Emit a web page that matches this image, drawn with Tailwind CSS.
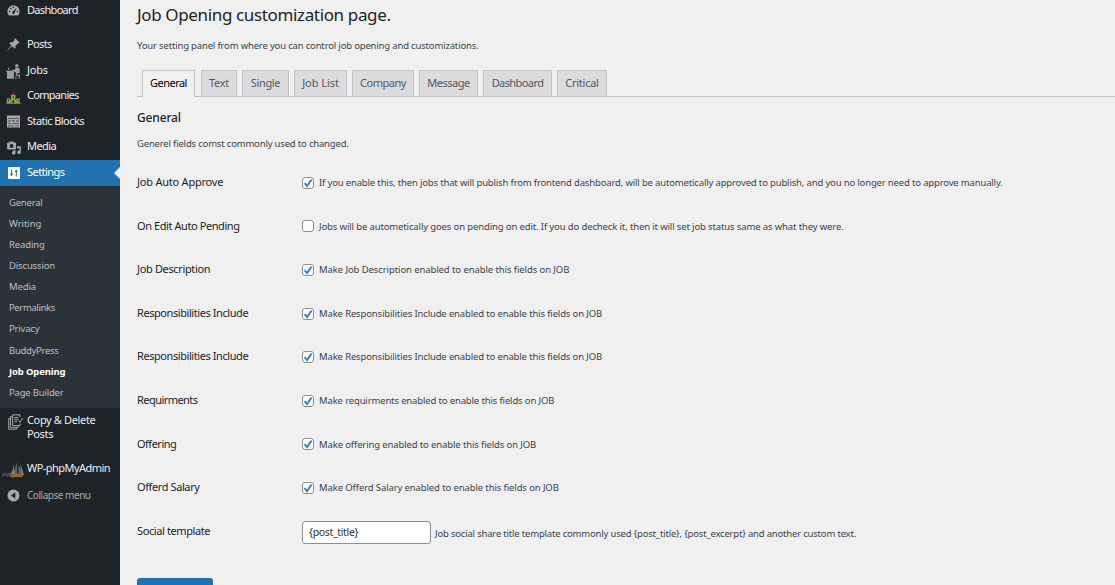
<!DOCTYPE html>
<html lang="en">
<head>
<meta charset="utf-8">
<title>Job Opening</title>
<script src="https://cdn.jsdelivr.net/npm/@tailwindcss/browser@4"></script>
</head>
<body class="flex h-[585px] w-[1115px] overflow-hidden bg-[#f0f0f0] font-['Noto_Sans','Open_Sans',sans-serif] text-[#3c434a]">
<svg class="hidden">
  <symbol id="tick" viewBox="0 0 12 12"><path d="M2.6 6.1 5 9.1 9.5 2.6" fill="none" stroke="#3582c4" stroke-width="1.9"/></symbol>
</svg>

<aside class="flex h-full w-[120px] shrink-0 flex-col bg-[#1d2327] text-[11px] text-[#f0f0f1] [&_svg]:shrink-0">
  <a class="flex h-[21px] items-center whitespace-nowrap">
    <svg class="mx-[7px] size-[13px]" viewBox="0 0 13 13"><path d="M2 11.5A6 6 0 0 1 .4 7.4a6.1 6.1 0 0 1 12.2 0A6 6 0 0 1 11 11.5z" fill="#a7aaad"/><g fill="#1d2327"><circle cx="2.5" cy="7.6" r=".75"/><circle cx="3.8" cy="4.5" r=".75"/><circle cx="6.5" cy="3.2" r=".75"/><circle cx="10.5" cy="7.6" r=".75"/><path d="m9.7 3.7-2 4.6a1.3 1.3 0 1 1-1.9-.8z"/></g></svg>
    <span class="tracking-[-0.68px]">Dashboard</span></a>
  <a class="mt-[10px] flex h-[26px] items-center whitespace-nowrap">
    <svg class="mx-[7px] size-[13px]" viewBox="0 0 13 13"><path d="m8.2.3 4.5 4.5-1.3.8-.7-.1-2.2 2.3c.3 1.2 0 2.2-.8 2.9L5.2 8.2.4 12.7l-.2-.2 4.2-5.1-2.2-2.3c.8-.8 1.8-1 2.9-.7l2.3-2.1-.1-.8z" fill="#a7aaad"/></svg>
    <span class="tracking-[-0.65px]">Posts</span></a>
  <a class="flex h-[26px] items-center whitespace-nowrap">
    <svg class="mx-[6px] mt-[3px] h-[15px] w-[15px]" viewBox="0 0 15 15"><g fill="#9a9da1"><circle cx="10.8" cy="1.8" r="1.7"/><path d="M9.3 3.8h3.4l1 1.2v4.2h-2.4v1.5H14v4h-1.2v-3h-3V8H8.6V6.7H6.3l-.2-1h2.8zM0 6.7h8.2v1.2H7.7v6.7H1.1V7.9H0zM1.7 3.5h.9l.8 2.6H2.3zM9.4 12.5h1.1v2.2H9.4z"/><path d="M1 7.5h6.8v7H1z"/></g></svg>
    <span class="tracking-[-0.2px]">Jobs</span></a>
  <a class="flex h-[25px] items-center whitespace-nowrap">
    <svg class="mx-[6px] mt-[4px] h-[15px] w-[15px]" viewBox="0 0 15 15"><path d="M.8 8.4h3.5V13H.8zM10.2 8.4h3.6V13h-3.6zM5 4.8h4.5V13H5z" fill="#86a843"/><path d="M3.5 10h7.5v3H3.5z" fill="#86a843"/><path d="M6.9.8h.7v2h-.7z" fill="#8c244f"/><path d="M5.3 4.9 7.2 2.8l2 2.1zM1.2 8.5l1.3-1.6 1.3 1.6zM10.8 8.5l1.3-1.6 1.3 1.6z" fill="#8c3153"/><path d="M2 9.7h1v1.5H2zM11.5 9.7h1v1.5h-1zM6.6 6.4h1.3V8H6.6zM6.2 10.4h2V13h-2z" fill="#29352b"/><path d="M.2 12.8h14.1v1H.2z" fill="#8c9b3b"/></svg>
    <span class="tracking-[-0.7px]">Companies</span></a>
  <a class="flex h-[26px] items-center whitespace-nowrap">
    <svg class="mx-[7px] h-[13px] w-[13px]" viewBox="0 0 13 13"><path d="M0 .5h13v12H0z" fill="#a7aaad"/><path d="M1 3h11v.7H1zM1 5.5h2.8v1H1zM5 5.5h2.8v1H5zM9 5.5h3v1H9zM1 8h2.8v.7H1zM5 8h7v.7H5zM1 10.4h5.6v.8H1zM8 10.4h4v.8H8z" fill="#3a4046"/></svg>
    <span class="tracking-[-0.56px]">Static Blocks</span></a>
  <a class="flex h-[26px] items-center whitespace-nowrap">
    <svg class="mt-[2px] mr-[6px] ml-[7px] size-[14px]" viewBox="0 0 14 14"><path fill-rule="evenodd" d="M1 1.5h1.4L3 .4h3.2l.7 1.1h1.3q.8 0 .8.9v5.2q0 .8-.8.8H1q-.9 0-.9-.8V2.4q0-.9.9-.9zM4.6 3.1a1.9 1.9 0 1 0 0 3.8 1.9 1.9 0 0 0 0-3.8z" fill="#a7aaad"/><path d="M10 5.2h3.8v6.3a1.8 1.8 0 1 1-1.3-1.9V7.2H10zM5.2 9.4h1.9v-.2h1.4v2.6a1.8 1.8 0 1 1-1.3-1.7z" fill="#a7aaad"/></svg>
    <span class="mb-[2px] tracking-[-0.55px]">Media</span></a>
  <a class="flex h-[26px] items-center whitespace-nowrap bg-[#2271b1] text-white">
    <svg class="mx-[8px] size-[12px]" viewBox="0 0 12 12"><rect width="12" height="12" rx=".8" fill="#fff"/><path d="M3.5 2.4v6M8.3 9.6v-6" stroke="#2271b1" stroke-width="1.1"/><path d="M1.8 6.7h3.4L3.5 9.3zM6.6 5h3.4L8.3 2.4z" fill="#2271b1"/></svg>
    <span class="mb-[2px] -ml-px tracking-[-0.55px]">Settings</span>
    <svg class="ml-auto h-[12px] w-[6px]" viewBox="0 0 6 12"><path d="M6 0v12L0 6z" fill="#f0f0f0"/></svg></a>
  <div class="flex h-[222px] shrink-0 flex-col bg-[#2c3338] pt-[6.2px] pl-[9px] text-[9.5px] text-[#bcbfc2] *:flex *:h-[21.15px] *:shrink-0 *:items-center">
    <a class="tracking-[-0.2px]">General</a>
    <a class="tracking-[-0.05px]">Writing</a>
    <a class="tracking-[-0.12px]">Reading</a>
    <a class="tracking-[-0.15px]">Discussion</a>
    <a class="tracking-[-0.12px]">Media</a>
    <a class="tracking-[-0.38px]">Permalinks</a>
    <a class="tracking-[-0.2px]">Privacy</a>
    <a class="tracking-[-0.3px]">BuddyPress</a>
    <a class="font-bold tracking-[-0.15px] text-white">Job Opening</a>
    <a class="tracking-[-0.2px]">Page Builder</a>
  </div>
  <a class="mt-[5px] flex h-[41px] whitespace-nowrap leading-[14px]">
    <svg class="mt-[1px] mr-[4px] ml-[8px] h-[16px] w-[15px]" viewBox="0 0 15 16"><g fill="none" stroke="#a7aaad" stroke-width="1"><path d="M12 9.5v2H4.6V.9H12v2.3M4.6 2.6H2.5v10.8h7.8v-1.7M2.5 4.4H.7v10.8h7.8v-1.6M6.3 3.6h4M6.3 5.7h4M6.3 7.8h2.7M10.4 6.6l1.5 1.8 2.8-4.3"/></g></svg>
    <span class="tracking-[-0.35px]">Copy &amp; Delete<br>Posts</span></a>
  <a class="flex h-[28px] items-center whitespace-nowrap">
    <svg class="mt-[7px] mr-[2px] ml-[1px] h-[24px] w-[24px]" viewBox="0 0 24 24"><path d="M16 2v13h-5q3-5 5-13zM17.5 5q4 5 4.5 10h-4.5z" fill="#61666a"/><path d="M13 4v10H9.8q2.3-4 3.2-10zM19 3l4 12h-2z" fill="#84888b"/><path d="M10 15.2h12l-2 1.8h-9z" fill="#8a7152"/><text x="1" y="16" font-size="5" font-style="italic" font-weight="bold" fill="#4c527b" textLength="8">php</text><text x="8" y="16.5" font-size="5" font-style="italic" font-weight="bold" fill="#a16a2a" textLength="14">MyAdmin</text></svg>
    <span class="tracking-[-0.54px]">WP-phpMyAdmin</span></a>
  <a class="flex h-[27px] items-center whitespace-nowrap text-[10px] text-[#a7aaad]">
    <svg class="mx-[7px] size-[13px]" viewBox="0 0 13 13"><circle cx="6.5" cy="6.5" r="6" fill="#a7aaad"/><path d="M8.3 3.2v6.6L4 6.5z" fill="#1d2327"/></svg>
    <span class="tracking-[-0.47px]">Collapse menu</span></a>
</aside>

<main class="flex min-w-0 flex-1 flex-col pl-[17px] whitespace-nowrap text-[9.5px] *:shrink-0">
  <h1 class="h-[31px] text-[17px] leading-[30px] tracking-[-0.36px] text-[#1d2327]">Job Opening customization page.</h1>
  <p class="h-[39px] leading-[30px] tracking-[-0.17px]">Your setting panel from where you can control job opening and customizations.</p>
  <nav class="flex h-[27px] gap-[5px] border-b border-[#c3c4c7] pl-[5px] text-[11px] text-[#50575e] *:flex *:items-center *:justify-center *:border *:border-b-0 *:border-[#c3c4c7]">
    <a class="-mb-px w-[53px] bg-[#f0f0f0] pb-[2px] tracking-[-0.53px] text-black">General</a>
    <a class="ml-px w-[36px] bg-[#dcdcde] tracking-[-0.3px]">Text</a>
    <a class="w-[47px] bg-[#dcdcde] tracking-[-0.35px]">Single</a>
    <a class="w-[53px] bg-[#dcdcde] tracking-[-0.05px]">Job List</a>
    <a class="w-[62px] bg-[#dcdcde] tracking-[-0.46px]">Company</a>
    <a class="w-[59px] bg-[#dcdcde] tracking-[-0.5px]">Message</a>
    <a class="w-[69px] bg-[#dcdcde] tracking-[-0.58px]">Dashboard</a>
    <a class="w-[50px] bg-[#dcdcde] tracking-[-0.25px]">Critical</a>
  </nav>
  <h2 class="h-[34px] text-[12px] leading-[41px] font-medium tracking-[-0.15px] text-[#1d2327]">General</h2>
  <p class="h-[30px] leading-[25px] tracking-[-0.18px]">Generel fields comst commonly used to changed.</p>

  <section class="flex flex-col *:flex *:h-[43.6px] *:items-center [&_h3]:mb-px [&_h3]:w-[165px] [&_h3]:text-[11px] [&_h3]:text-[#1d2327]">
    <div><h3 class="tracking-[-0.22px]">Job Auto Approve</h3><span class="mr-[5px] size-[12px] rounded-[3px] border border-[#8c8f94] bg-white"><svg class="-m-px size-[12px]"><use href="#tick"/></svg></span><span class="tracking-[-0.158px]">If you enable this, then jobs that will publish from frontend dashboard, will be autometically approved to publish, and you no longer need to approve manually.</span></div>
    <div><h3 class="tracking-[-0.42px]">On Edit Auto Pending</h3><span class="mr-[5px] size-[12px] rounded-[3px] border border-[#8c8f94] bg-white"></span><span class="mt-px tracking-[-0.13px]">Jobs will be autometically goes on pending on edit. If you do decheck it, then it will set job status same as what they were.</span></div>
    <div><h3 class="tracking-[-0.35px]">Job Description</h3><span class="mr-[5px] size-[12px] rounded-[3px] border border-[#8c8f94] bg-white"><svg class="-m-px size-[12px]"><use href="#tick"/></svg></span><span class="tracking-[-0.09px]">Make Job Description enabled to enable this fields on JOB</span></div>
    <div><h3 class="tracking-[-0.43px]">Responsibilities Include</h3><span class="mr-[5px] size-[12px] rounded-[3px] border border-[#8c8f94] bg-white"><svg class="-m-px size-[12px]"><use href="#tick"/></svg></span><span class="mt-px tracking-[-0.144px]">Make Responsibilities Include enabled to enable this fields on JOB</span></div>
    <div><h3 class="tracking-[-0.43px]">Responsibilities Include</h3><span class="mr-[5px] size-[12px] rounded-[3px] border border-[#8c8f94] bg-white"><svg class="-m-px size-[12px]"><use href="#tick"/></svg></span><span class="tracking-[-0.144px]">Make Responsibilities Include enabled to enable this fields on JOB</span></div>
    <div><h3 class="tracking-[-0.55px]">Requirments</h3><span class="mr-[5px] size-[12px] rounded-[3px] border border-[#8c8f94] bg-white"><svg class="-m-px size-[12px]"><use href="#tick"/></svg></span><span class="tracking-[-0.144px]">Make requirments enabled to enable this fields on JOB</span></div>
    <div><h3 class="tracking-[-0.5px]">Offering</h3><span class="mr-[5px] size-[12px] rounded-[3px] border border-[#8c8f94] bg-white"><svg class="-m-px size-[12px]"><use href="#tick"/></svg></span><span class="mt-px tracking-[-0.125px]">Make offering enabled to enable this fields on JOB</span></div>
    <div><h3 class="tracking-[-0.4px]">Offerd Salary</h3><span class="mr-[5px] size-[12px] rounded-[3px] border border-[#8c8f94] bg-white"><svg class="-m-px size-[12px]"><use href="#tick"/></svg></span><span class="tracking-[-0.115px]">Make Offerd Salary enabled to enable this fields on JOB</span></div>
    <div><h3 class="tracking-[-0.4px]">Social template</h3><input class="mt-[2px] mr-[4px] h-[23px] w-[129px] rounded-[3px] border border-[#8c8f94] bg-white px-[6px] pb-[2px] text-[10.5px] tracking-[-0.34px] text-[#2c3338]" value="{post_title}"><span class="mt-[5px] tracking-[-0.187px]">Job social share title template commonly used {post_title}, {post_excerpt} and another custom text.</span></div>
  </section>
  <button class="mt-[25px] h-[24px] w-[76px] rounded-[3px] bg-[#2271b1]" aria-label="Save"></button>
</main>
</body>
</html>
